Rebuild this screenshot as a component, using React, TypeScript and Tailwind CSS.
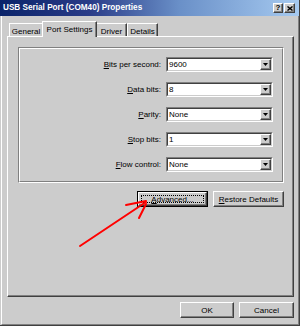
import React from "react";

const raised =
  "bg-[#cccccc] border border-t-white border-l-white border-r-[#404040] border-b-[#404040] shadow-[inset_-1px_-1px_0_#808080]";

function Combo({ value }: { value: string }) {
  return (
    <div className="w-[107px] h-[15px] border border-t-[#808080] border-l-[#808080] border-r-white border-b-white">
      <div className="h-full flex border border-t-[#404040] border-l-[#404040] border-r-[#cccccc] border-b-[#cccccc] bg-white">
        <div className="flex-1 pl-[1px] leading-[11px]">{value}</div>
        <div className={"w-[11px] h-full flex items-center justify-center " + raised}>
          <svg width="5" height="3" viewBox="0 0 5 3">
            <path d="M0 0H5L2.5 3Z" fill="#000" />
          </svg>
        </div>
      </div>
    </div>
  );
}

function Row({ k, rest, value }: { k: string; rest: string; value: string }) {
  return (
    <div className="flex items-center justify-end gap-[5px] pr-[9px] h-[15px]">
      <div className="leading-[9px]">
        <span className="underline underline-offset-1">{k}</span>
        {rest}
      </div>
      <Combo value={value} />
    </div>
  );
}

function Btn({ w, children, def }: { w: string; children: React.ReactNode; def?: boolean }) {
  if (def) {
    return (
      <div className={w + " h-[16px] border border-black"}>
        <div className={"h-full flex items-center justify-center p-[2px] " + raised}>
          <div className="w-full h-full flex items-center justify-center border border-dotted border-black leading-[9px]">
            {children}
          </div>
        </div>
      </div>
    );
  }
  return (
    <div className={w + " h-[16px] flex items-center justify-center leading-[9px] " + raised}>{children}</div>
  );
}

export default function App() {
  return (
    <div className="relative w-[300px] h-[326px] bg-[#cccccc] flex flex-col border-r border-b border-[#404040] overflow-hidden font-['Liberation_Sans',Arial,sans-serif] text-[8px] text-black">
      {/* title bar */}
      <div className="h-[16px] shrink-0 flex items-center pl-[3px] pr-[4px] bg-[linear-gradient(to_right,#0a246a,#2a3c88_30%,#6a90c8_60%,#a6caf0)]">
        <div className="text-white font-bold text-[8.2px] leading-[10px]">USB Serial Port (COM40) Properties</div>
        <div className="ml-auto flex gap-[1px]">
          <div className={"w-[10px] h-[10px] flex items-center justify-center font-bold text-[8px] leading-[8px] " + raised}>?</div>
          <div className={"w-[11px] h-[10px] flex items-center justify-center " + raised}>
            <svg width="6" height="5" viewBox="0 0 6 5">
              <path d="M0.5 0.5L5.5 4.5M5.5 0.5L0.5 4.5" stroke="#000" strokeWidth="1.4" />
            </svg>
          </div>
        </div>
      </div>

      {/* body */}
      <div className="flex-1 ml-[1px] flex flex-col border-l border-white border-r border-b border-r-[#808080] border-b-[#808080]">
        {/* tabs */}
        <div className="mt-[5px] h-[15px] flex items-end pl-[7px]">
          <div className="w-[33px] h-[13px] flex justify-center pt-[3px] leading-[9px] border-l border-t border-white">General</div>
          <div className="relative z-10 w-[55px] h-[16px] -mb-px flex justify-center pt-[3px] leading-[9px] bg-[#cccccc] border-l border-t border-white border-r border-r-[#404040] shadow-[inset_-1px_0_0_#808080]">
            Port Settings
          </div>
          <div className="w-[30px] h-[13px] flex justify-center pt-[3px] leading-[9px] border-t border-white border-r border-r-[#404040] shadow-[inset_-1px_0_0_#808080]">Driver</div>
          <div className="w-[31px] h-[13px] flex justify-center pt-[3px] leading-[9px] border-l border-t border-white border-r border-r-[#404040] shadow-[inset_-1px_0_0_#808080]">Details</div>
        </div>

        {/* panel */}
        <div className="ml-[5px] mr-[4px] h-[261px] flex flex-col border border-t-white border-l-white border-r-[#404040] border-b-[#404040] shadow-[inset_-1px_-1px_0_#808080]">
          <div className="ml-[10px] mt-[10px] w-[266px] h-[136px] border border-t-[#808080] border-l-[#808080] border-r-white border-b-white">
            <div className="h-full flex flex-col gap-[10px] pt-[8px] border border-t-white border-l-white border-r-[#808080] border-b-[#808080]">
              <Row k="B" rest="its per second:" value="9600" />
              <Row k="D" rest="ata bits:" value="8" />
              <Row k="P" rest="arity:" value="None" />
              <Row k="S" rest="top bits:" value="1" />
              <Row k="F" rest="low control:" value="None" />
            </div>
          </div>
          <div className="ml-[10px] mt-[8px] w-[266px] flex justify-end gap-[5px]">
            <Btn w="w-[71px]" def>
              <span>
                <span className="underline underline-offset-1">A</span>dvanced...
              </span>
            </Btn>
            <Btn w="w-[71px]">
              <span>
                <span className="underline underline-offset-1">R</span>estore Defaults
              </span>
            </Btn>
          </div>
        </div>

        {/* OK / Cancel */}
        <div className="mt-[5px] flex justify-end gap-[5px] pr-[4px]">
          <Btn w="w-[54px]">OK</Btn>
          <Btn w="w-[55px]">Cancel</Btn>
        </div>
      </div>

      {/* red arrow annotation */}
      <svg className="absolute left-0 top-0 pointer-events-none" width="300" height="326" viewBox="0 0 300 326">
        <g stroke="#ff0000" strokeWidth="2" strokeLinecap="round" fill="none">
          <path d="M80 246L146 202" />
          <path d="M126 205L146 201" />
          <path d="M146 204L139 218" />
        </g>
      </svg>
    </div>
  );
}
